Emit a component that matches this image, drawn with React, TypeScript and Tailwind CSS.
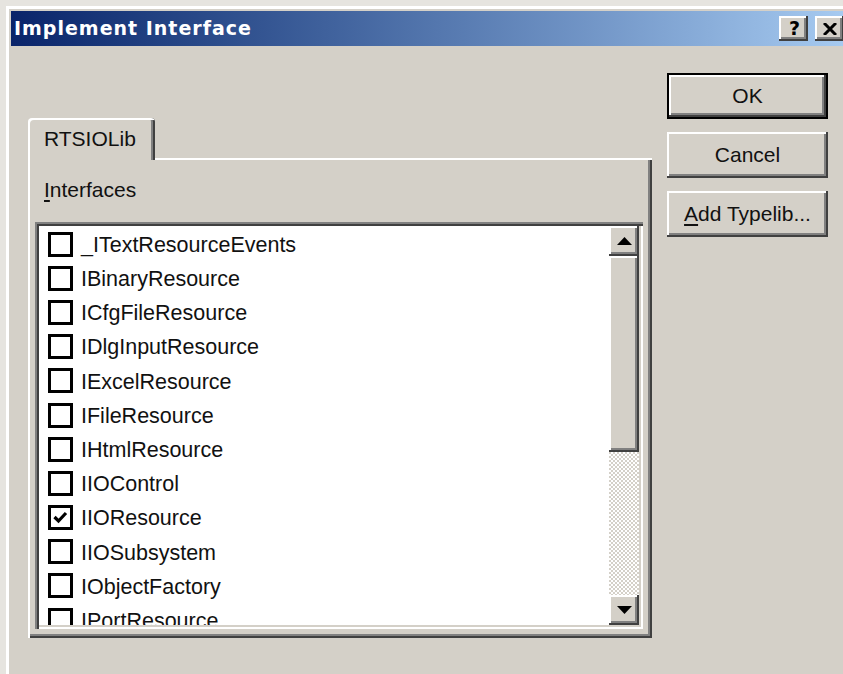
import React from "react";

interface InterfaceItem {
  name: string;
  checked: boolean;
}

const interfaces: InterfaceItem[] = [
  { name: "_ITextResourceEvents", checked: false },
  { name: "IBinaryResource", checked: false },
  { name: "ICfgFileResource", checked: false },
  { name: "IDlgInputResource", checked: false },
  { name: "IExcelResource", checked: false },
  { name: "IFileResource", checked: false },
  { name: "IHtmlResource", checked: false },
  { name: "IIOControl", checked: false },
  { name: "IIOResource", checked: true },
  { name: "IIOSubsystem", checked: false },
  { name: "IObjectFactory", checked: false },
  { name: "IPortResource", checked: false },
];

// classic 3d bevel used by buttons, scroll arrows and the thumb
const raised =
  "shadow-[inset_-2px_-2px_0_#404040,inset_2px_2px_0_#fff,inset_-4px_-4px_0_#808080,inset_4px_4px_0_#d4d0c8]";

const CheckBox = ({ checked }: { checked: boolean }) => (
  <div className="w-[25px] h-[25px] border-[3.5px] border-black bg-white flex items-center justify-center shrink-0">
    {checked && (
      <svg width="17" height="17" viewBox="0 0 17 17">
        <polyline
          points="2.5,8 6.5,12 14,4"
          fill="none"
          stroke="#000"
          strokeWidth="3.2"
        />
      </svg>
    )}
  </div>
);

const DialogButton = ({
  children,
  isDefault,
}: {
  children: React.ReactNode;
  isDefault?: boolean;
}) => (
  <div
    className={
      isDefault
        ? "h-[46px] border-2 border-black bg-[#d4d0c8]"
        : "h-[46px] bg-[#d4d0c8]"
    }
  >
    <div
      className={`${raised} h-full flex items-center justify-center text-[21px] text-[#111]`}
    >
      {children}
    </div>
  </div>
);

const ScrollArrow = ({ up }: { up?: boolean }) => (
  <div className={`${raised} h-[30px] bg-[#d4d0c8] flex items-center justify-center`}>
    <svg width="15" height="8" viewBox="0 0 15 8">
      {up ? (
        <polygon points="0,8 15,8 7.5,0" fill="#000" />
      ) : (
        <polygon points="0,0 15,0 7.5,8" fill="#000" />
      )}
    </svg>
  </div>
);

const App = () => {
  return (
    <div className="w-[843px] h-[674px] overflow-hidden bg-[#d4d0c8] pt-[11px] pl-[11px] shadow-[inset_6px_6px_0_#e6e4df,inset_9px_9px_0_#fff] font-['Liberation_Sans',Arial,sans-serif]">
      {/* title bar */}
      <div className="h-[35px] flex items-center justify-between bg-linear-to-r from-[#0a246a] to-[#a6caf0] pl-[3px]">
        <div className="text-white font-bold text-[19px] tracking-[1px] font-['DejaVu_Sans',sans-serif]">
          Implement Interface
        </div>
        <div className="flex gap-[7px] -mr-[1px]">
          <div
            className={`${raised} w-[29px] h-[25px] bg-[#d4d0c8] flex items-center justify-center text-[19px] font-bold font-['DejaVu_Sans',sans-serif] leading-none pl-[2px]`}
          >
            ?
          </div>
          <div
            className={`${raised} w-[29px] h-[25px] bg-[#d4d0c8] flex items-center justify-center`}
          >
            <svg width="14" height="12" viewBox="0 0 14 12">
              <path d="M1 0 L13 12 M13 0 L1 12" stroke="#000" strokeWidth="3" />
            </svg>
          </div>
        </div>
      </div>

      <div className="flex pl-[17px]">
        {/* tab control */}
        <div className="pt-[72px] w-[624px] flex flex-col">
          <div className="relative z-10 -mb-[2px] w-[127px] h-[42px] bg-[#d4d0c8] rounded-t-[4px] shadow-[inset_2px_2px_0_#fff,inset_-2px_0_0_#404040,inset_-4px_0_0_#808080] flex items-center pl-[16px] text-[21px] text-[#111]">
            RTSIOLib
          </div>
          <div className="h-[480px] bg-[#d4d0c8] shadow-[inset_2px_2px_0_#fff,inset_-2px_-2px_0_#404040,inset_-4px_-4px_0_#808080] pt-[20px]">
            <div className="pl-[16px] h-[24px] leading-[24px] text-[21px] text-[#111]">
              <span className="underline underline-offset-[3px]">I</span>nterfaces
            </div>
            <div className="mt-[20px] ml-[7px] w-[608px] h-[407px] bg-white p-[4px] flex shadow-[inset_2px_2px_0_#808080,inset_4px_4px_0_#404040,inset_-2px_-2px_0_#fff,inset_-4px_-4px_0_#d4d0c8]">
              <div className="flex-1 overflow-hidden pt-[1px]">
                {interfaces.map((item) => (
                  <div key={item.name} className="h-[34.2px] flex items-center pl-[9px] gap-[8px]">
                    <CheckBox checked={item.checked} />
                    <span className="text-[21.5px] text-[#111] leading-none pt-[3px]">{item.name}</span>
                  </div>
                ))}
              </div>
              {/* vertical scrollbar */}
              <div className="w-[30px] flex flex-col">
                <ScrollArrow up />
                <div className={`${raised} h-[196px] bg-[#d4d0c8]`} />
                <div className="flex-1 bg-[image:repeating-conic-gradient(#fff_0_25%,#d4d0c8_0_50%)] bg-[length:4px_4px]" />
                <ScrollArrow />
              </div>
            </div>
          </div>
        </div>

        {/* command buttons */}
        <div className="ml-[15px] mt-[27px] w-[161px] flex flex-col gap-[13px]">
          <DialogButton isDefault>OK</DialogButton>
          <DialogButton>Cancel</DialogButton>
          <DialogButton>
            <span>
              <span className="underline underline-offset-[3px]">A</span>dd Typelib...
            </span>
          </DialogButton>
        </div>
      </div>
    </div>
  );
};

export default App;
